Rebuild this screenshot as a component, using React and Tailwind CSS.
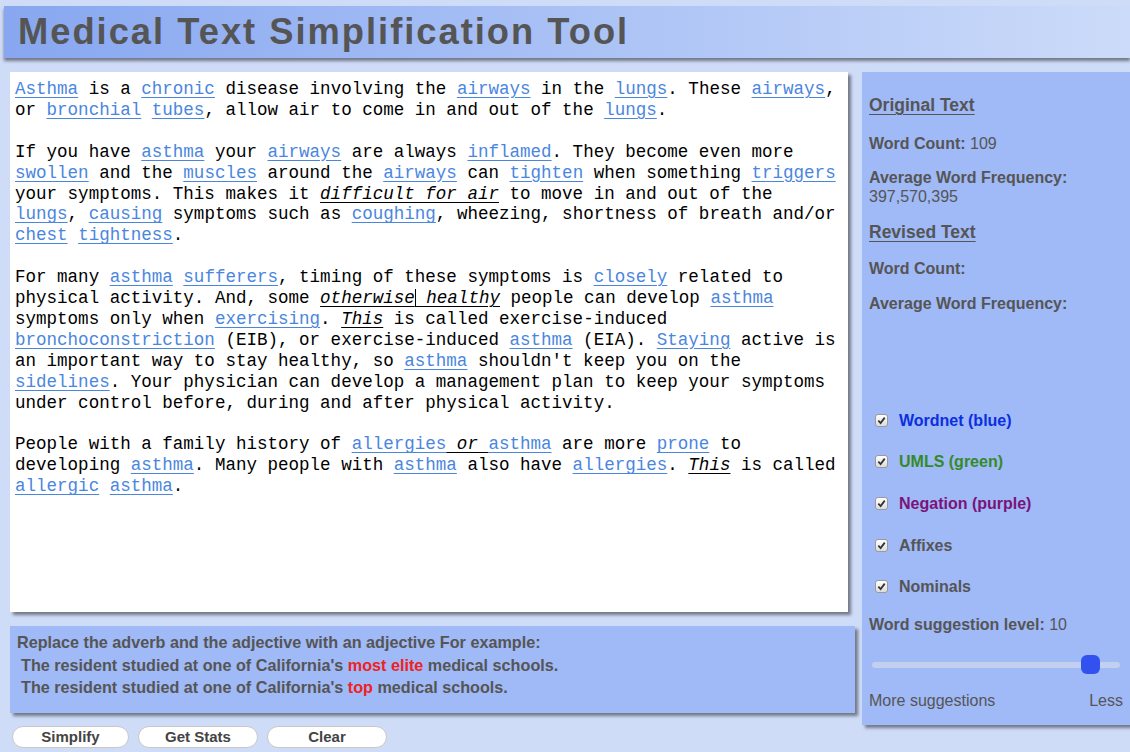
import { useState } from 'react';

// segments: plain string, { l: 'word' } for a suggestion link, { e: 'text' } for emphasised text
const paragraphs = [
  [
    [{ l: 'Asthma' }, ' is a ', { l: 'chronic' }, ' disease involving the ', { l: 'airways' }, ' in the ', { l: 'lungs' }, '. These ', { l: 'airways' }, ','],
    ['or ', { l: 'bronchial' }, ' ', { l: 'tubes' }, ', allow air to come in and out of the ', { l: 'lungs' }, '.'],
  ],
  [
    ['If you have ', { l: 'asthma' }, ' your ', { l: 'airways' }, ' are always ', { l: 'inflamed' }, '. They become even more'],
    [{ l: 'swollen' }, ' and the ', { l: 'muscles' }, ' around the ', { l: 'airways' }, ' can ', { l: 'tighten' }, ' when something ', { l: 'triggers' }],
    ['your symptoms. This makes it ', { e: 'difficult for air' }, ' to move in and out of the'],
    [{ l: 'lungs' }, ', ', { l: 'causing' }, ' symptoms such as ', { l: 'coughing' }, ', wheezing, shortness of breath and/or'],
    [{ l: 'chest' }, ' ', { l: 'tightness' }, '.'],
  ],
  [
    ['For many ', { l: 'asthma' }, ' ', { l: 'sufferers' }, ', timing of these symptoms is ', { l: 'closely' }, ' related to'],
    ['physical activity. And, some ', { e: 'otherwise', caret: true }, { e: ' healthy' }, ' people can develop ', { l: 'asthma' }],
    ['symptoms only when ', { l: 'exercising' }, '. ', { e: 'This' }, ' is called exercise-induced'],
    [{ l: 'bronchoconstriction' }, ' (EIB), or exercise-induced ', { l: 'asthma' }, ' (EIA). ', { l: 'Staying' }, ' active is'],
    ['an important way to stay healthy, so ', { l: 'asthma' }, " shouldn't keep you on the"],
    [{ l: 'sidelines' }, '. Your physician can develop a management plan to keep your symptoms'],
    ['under control before, during and after physical activity.'],
  ],
  [
    ['People with a family history of ', { l: 'allergies' }, { e: ' or ' }, { l: 'asthma' }, ' are more ', { l: 'prone' }, ' to'],
    ['developing ', { l: 'asthma' }, '. Many people with ', { l: 'asthma' }, ' also have ', { l: 'allergies' }, '. ', { e: 'This' }, ' is called'],
    [{ l: 'allergic' }, ' ', { l: 'asthma' }, '.'],
  ],
];

function Segment({ seg }) {
  if (typeof seg === 'string') return <span>{seg}</span>;
  if (seg.l) return <span className="text-[#4a86e0] underline underline-offset-[3px] cursor-pointer">{seg.l}</span>;
  return (
    <span className="italic underline underline-offset-[3px]">
      {seg.e}
      {seg.caret && <span className="inline-block w-px h-[18px] bg-black align-[-4px]"></span>}
    </span>
  );
}

function Check({ label, color }) {
  const [on, setOn] = useState(true);
  return (
    <label className="flex items-center gap-[11px] h-[20px] cursor-pointer" onClick={() => setOn(!on)}>
      <span className="ml-[6px] w-[13px] h-[13px] rounded-[3px] border border-[#9a9a9a] bg-gradient-to-b from-white to-[#dcdcdc] flex items-center justify-center">
        {on && (
          <svg width="9" height="9" viewBox="0 0 10 10">
            <path d="M1.5 5.2 L4 7.8 L8.6 1.8" fill="none" stroke="#333" strokeWidth="2" />
          </svg>
        )}
      </span>
      <span className={`font-bold ${color}`}>{label}</span>
    </label>
  );
}

export default function App() {
  const [level] = useState(10);

  return (
    <div className="min-h-screen bg-[#cfdcf8] font-['Liberation_Sans',Arial,sans-serif] text-[#555] overflow-hidden">
      <div className="pt-[6px] pl-[4px]">
        <div className="h-[52px] bg-gradient-to-r from-[#88a7f0] to-[#ccdbf9] shadow-[0_3px_3px_rgba(0,0,0,0.45)] flex items-center pl-[14px]">
          <h1 className="text-[36.3px] font-bold tracking-[2px] text-[#555] leading-none">Medical Text Simplification Tool</h1>
        </div>
      </div>

      <div className="flex mt-[14px]">
        <div className="ml-[10px] w-[845px] flex flex-col">
          <div className="w-[838px] h-[540px] bg-white shadow-[3px_3px_3px_rgba(0,0,0,0.45)] px-[5px] pt-[7px] font-['Liberation_Mono','Courier_New',monospace] text-[17.55px] leading-[20.9px] text-black whitespace-pre">
            {paragraphs.map((para, pi) => (
              <div key={pi} className={pi > 0 ? 'mt-[20.9px]' : ''}>
                {para.map((line, li) => (
                  <div key={li}>
                    {line.map((seg, si) => (
                      <Segment key={si} seg={seg} />
                    ))}
                  </div>
                ))}
              </div>
            ))}
          </div>

          <div className="mt-[14px] h-[87px] bg-[#a0b9f7] shadow-[3px_3px_3px_rgba(0,0,0,0.45)] px-[7px] pt-[5px] text-[16.2px] font-bold leading-[22.5px] text-[#555]">
            <div>Replace the adverb and the adjective with an adjective For example:</div>
            <div className="pl-[4px]">
              The resident studied at one of California's <span className="text-[#ee2222]">most elite</span> medical schools.
            </div>
            <div className="pl-[4px]">
              The resident studied at one of California's <span className="text-[#ee2222]">top</span> medical schools.
            </div>
          </div>

          <div className="mt-[13px] flex gap-[9px] pl-[2px]">
            <button className="w-[117px] h-[22px] rounded-full bg-white border border-[#c8c8c8] text-[15px] font-bold text-[#444] leading-[18px]">Simplify</button>
            <button className="w-[120px] h-[22px] rounded-full bg-white border border-[#c8c8c8] text-[15px] font-bold text-[#444] leading-[18px]">Get Stats</button>
            <button className="w-[120px] h-[22px] rounded-full bg-white border border-[#c8c8c8] text-[15px] font-bold text-[#444] leading-[18px]">Clear</button>
          </div>
        </div>

        <div className="ml-[7px] flex-1 h-[653px] bg-[#a0b9f7] shadow-[3px_3px_3px_rgba(0,0,0,0.45)] pl-[7px] pr-[7px] pt-[24px] text-[16px] leading-[19px] text-[#555]">
          <div className="text-[17.5px] font-bold underline underline-offset-[3px]">Original Text</div>
          <div className="mt-[19px]"><span className="font-bold">Word Count:</span> 109</div>
          <div className="mt-[15px] font-bold">Average Word Frequency:</div>
          <div>397,570,395</div>
          <div className="mt-[17px] text-[17.5px] font-bold underline underline-offset-[3px]">Revised Text</div>
          <div className="mt-[17px] font-bold">Word Count:</div>
          <div className="mt-[16px] font-bold">Average Word Frequency:</div>

          <div className="mt-[97px] flex flex-col gap-[21.7px]">
            <Check label="Wordnet (blue)" color="text-[#0b2fe0]" />
            <Check label="UMLS (green)" color="text-[#358a28]" />
            <Check label="Negation (purple)" color="text-[#7a1478]" />
            <Check label="Affixes" color="text-[#555]" />
            <Check label="Nominals" color="text-[#555]" />
          </div>

          <div className="mt-[18px]"><span className="font-bold">Word suggestion level:</span> {level}</div>

          <div className="mt-[28px] mx-[3px] relative h-[6px] rounded-full bg-[#c3cfee]">
            <span className="absolute top-[-7px] left-[209px] w-[19px] h-[19px] rounded-[6px] bg-[#3252ef]"></span>
          </div>

          <div className="mt-[23px] flex justify-between">
            <span>More suggestions</span>
            <span>Less</span>
          </div>
        </div>
      </div>
    </div>
  );
}
